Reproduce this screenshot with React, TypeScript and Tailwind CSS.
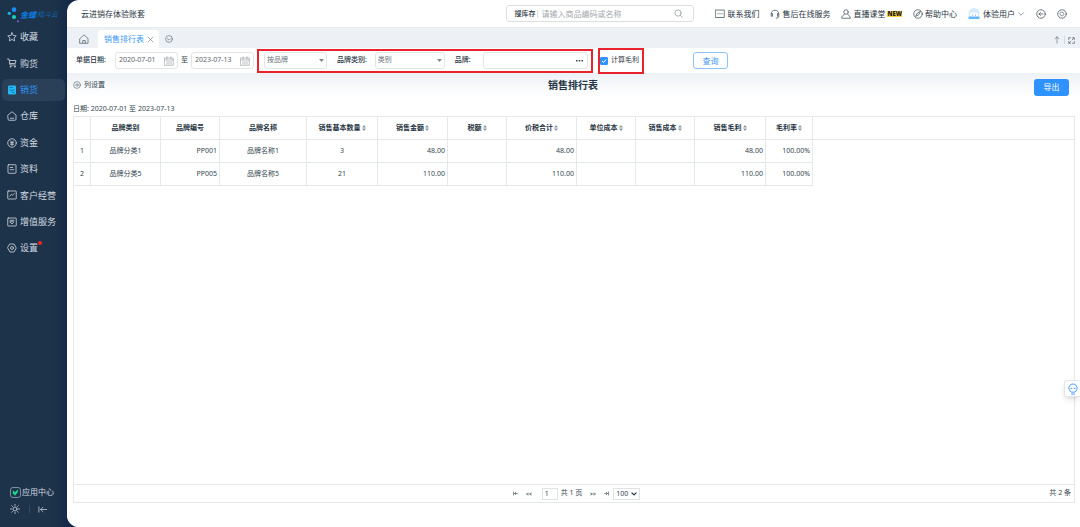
import type { ReactNode } from "react";
import clsx from "clsx";

const Icon = ({ children, className }: { children: ReactNode; className?: string }) => (
  <svg
    viewBox="0 0 20 20"
    fill="none"
    stroke="currentColor"
    strokeWidth={1.6}
    strokeLinecap="round"
    strokeLinejoin="round"
    aria-hidden="true"
    className={clsx("shrink-0", className)}
  >
    {children}
  </svg>
);

const menu: { label: string; icon: ReactNode; active?: boolean; dot?: boolean }[] = [
  { label: "收藏", icon: <path d="M10 1.500l2.600 5.400 5.900.8-4.300 4.100 1 5.900-5.200-2.800-5.200 2.800 1-5.900L1.500 7.700l5.900-.8z" /> },
  {
    label: "购货",
    icon: (
      <>
        <path d="M1 2h3l2 12h11M5 5h13l-1.500 6H6" />
        <circle cx="7" cy="17.500" r="1" />
        <circle cx="15.500" cy="17.500" r="1" />
      </>
    ),
  },
  {
    label: "销货",
    active: true,
    icon: (
      <>
        <rect x="2" y="1" width="16" height="18" rx="2" fill="#22b8f0" stroke="none" />
        <path d="M6 5h5M6 9l4 3 4-3M11 15h3" stroke="#1460a8" />
      </>
    ),
  },
  { label: "仓库", icon: <path d="M2 8l8-6.500L18 8v8.500a2 2 0 0 1-2 2H4a2 2 0 0 1-2-2zM6.500 14.500h7" /> },
  {
    label: "资金",
    icon: (
      <>
        <circle cx="10" cy="10" r="8.500" />
        <path d="M7 5.500l3 3.500 3-3.500M10 9v6M7 9.500h6M7 12.500h6" />
      </>
    ),
  },
  {
    label: "资料",
    icon: (
      <>
        <rect x="2" y="1.500" width="16" height="17" rx="1" />
        <path d="M6.500 7h5M6.500 11.500h7" />
      </>
    ),
  },
  {
    label: "客户经营",
    icon: (
      <>
        <rect x="1.500" y="2" width="17" height="16" rx="1" />
        <path d="M5.500 12l3-3 2.500 1.500L14.500 7" />
      </>
    ),
  },
  {
    label: "增值服务",
    icon: (
      <>
        <rect x="1.500" y="2" width="17" height="16" rx="1" />
        <path d="M6 6.500h8M6.500 10l3.500 4 3.500-4a2 2 0 0 0-3.500-.5A2 2 0 0 0 6.500 10z" />
      </>
    ),
  },
  {
    label: "设置",
    dot: true,
    icon: (
      <>
        <path d="M6 2h8l4.500 8L14 18H6l-4.500-8z" />
        <circle cx="10" cy="10" r="3" />
      </>
    ),
  },
];

const links: { label: string; icon: ReactNode; badge?: string }[] = [
  {
    label: "联系我们",
    icon: (
      <>
        <path d="M1.500 2h17v15h-17z" />
        <path d="M5.500 9.500h1M9.500 9.500h1M13.500 9.500h1" />
      </>
    ),
  },
  {
    label: "售后在线服务",
    icon: <path d="M2.500 10a7.500 7.500 0 0 1 15 0M2.500 10v4.500H5V10zM17.500 10v4.500H15V10zM17.500 14.500c0 2.500-2 4-5 4" />,
  },
  {
    label: "直播课堂",
    badge: "NEW",
    icon: (
      <>
        <circle cx="10" cy="6" r="4.500" />
        <path d="M6.500 10.500L1.500 16v2.500h17V16l-5-5.500" />
      </>
    ),
  },
  {
    label: "帮助中心",
    icon: (
      <>
        <circle cx="10" cy="10" r="8.500" />
        <path d="M14.500 5.500l-3 6-6 3 3-6z" />
      </>
    ),
  },
];

const columns = [
  { title: "", width: "w-[17px]", align: "text-center" },
  { title: "品牌类别", width: "w-[70px]", align: "text-center" },
  { title: "品牌编号", width: "w-[59px]", align: "text-right" },
  { title: "品牌名称", width: "w-[87px]", align: "text-center" },
  { title: "销售基本数量", width: "w-[71px]", align: "text-center", sort: true },
  { title: "销售金额", width: "w-[70px]", align: "text-right", sort: true },
  { title: "税额", width: "w-[59px]", align: "text-right", sort: true },
  { title: "价税合计", width: "w-[70px]", align: "text-right", sort: true },
  { title: "单位成本", width: "w-[59px]", align: "text-right", sort: true },
  { title: "销售成本", width: "w-[59px]", align: "text-right", sort: true },
  { title: "销售毛利", width: "w-[71px]", align: "text-right", sort: true },
  { title: "毛利率", width: "w-[47px]", align: "text-right", sort: true },
];

const rows = [
  ["1", "品牌分类1", "PP001", "品牌名称1", "3", "48.00", "", "48.00", "", "", "48.00", "100.00%"],
  ["2", "品牌分类5", "PP005", "品牌名称5", "21", "110.00", "", "110.00", "", "", "110.00", "100.00%"],
];

const Sidebar = () => (
  <aside className="flex w-[67px] shrink-0 flex-col text-[#d3dae1]">
    <div className="flex h-[26px] items-center pl-[7px] pt-1">
      <svg viewBox="0 0 36 48" className="h-4 w-3 shrink-0" aria-hidden="true">
        <circle cx="21" cy="8" r="7" fill="#1b8df5" />
        <circle cx="7" cy="19" r="5" fill="#12b9e8" />
        <circle cx="21" cy="30" r="6" fill="#16d3c0" />
        <circle cx="33" cy="43" r="3" fill="#8a5cf0" />
      </svg>
      <span className="ml-px flex items-center gap-px whitespace-nowrap text-[7px] italic text-[#1565b0]">
        <b className="text-[8px] text-[#0d7be0]">金蝶</b>
        精斗云
      </span>
    </div>
    <ul className="flex h-[233px] flex-col justify-between">
      {menu.map((item) => (
        <li key={item.label} className="px-[2px]">
          <a
            href="#"
            className={clsx(
              "flex h-[22px] items-center gap-[3px] rounded-[5px] pl-[5px] text-[9px]",
              item.active && "bg-[#2a4059] text-[#2f93f5]"
            )}
          >
            <Icon className="size-[10px]">{item.icon}</Icon>
            <span className="relative whitespace-nowrap">
              {item.label}
              {item.dot && <i className="absolute -right-1 top-0 size-1 rounded-full bg-[#f5222d]" />}
            </span>
          </a>
        </li>
      ))}
    </ul>
    <div className="mt-auto pb-3 pl-[10px]">
      <a href="#" className="flex h-[14px] items-center gap-px text-[8px]">
        <svg viewBox="0 0 20 20" className="size-[11px] shrink-0" fill="none" aria-hidden="true">
          <rect x="1" y="1" width="18" height="18" rx="4" stroke="#9aa8b5" strokeWidth="1.500" />
          <path d="M5 6l4 3 6-5-1 6-5 6-4-4z" fill="#1fd08a" />
        </svg>
        应用中心
      </a>
      <div className="mt-1 flex h-3 items-center">
        <button aria-label="主题">
          <Icon className="size-[10px]">
            <circle cx="10" cy="10" r="4" />
            <path d="M10 1v2M10 17v2M1 10h2M17 10h2M3.500 3.500l1.500 1.500M15 15l1.500 1.500M16.500 3.500L15 5M5 15l-1.500 1.500" />
          </Icon>
        </button>
        <span className="ml-[9px] mr-2 h-2 w-px bg-[#34485d]" />
        <button aria-label="收起">
          <Icon className="size-[9px]">
            <path d="M2 4v12M19 10H6M11 5l-5 5 5 5" />
          </Icon>
        </button>
      </div>
    </div>
  </aside>
);

const Header = () => (
  <header className="flex h-7 items-center border-b border-[#e6ebef] pl-[14px] pr-[13px] text-[8px] text-[#1f3442]">
    <span>云进销存体验账套</span>
    <div className="ml-auto flex h-[17px] w-[188px] items-center rounded-[3px] border border-[#dcdfe2] px-[7px]">
      <label htmlFor="stock" className="shrink-0 border-r border-[#dcdfe2] pr-[2px] text-[7px] font-medium leading-[8px]">
        搜库存
      </label>
      <input
        id="stock"
        placeholder="请输入商品编码或名称"
        className="min-w-0 flex-1 pl-[3px] outline-none placeholder:text-[#a3a8ad]"
      />
      <Icon className="mr-[3px] size-[9px] text-[#8d959c]">
        <circle cx="9" cy="9" r="7" />
        <path d="M14 14l4.500 4.500" />
      </Icon>
    </div>
    <nav className="ml-[21px] flex items-center gap-[11px]">
      {links.map((link) => (
        <a key={link.label} href="#" className="flex items-center gap-[2px] whitespace-nowrap">
          <Icon className="size-[10px] text-[#4a5a66]">{link.icon}</Icon>
          {link.label}
          {link.badge && (
            <b className="bg-[#fcd53a] text-[6px] font-black leading-[6px] text-[#1c1c1c]">{link.badge}</b>
          )}
        </a>
      ))}
      <button className="flex items-center gap-[3px] whitespace-nowrap">
        <svg viewBox="0 0 24 24" className="size-3" aria-hidden="true">
          <circle cx="12" cy="11" r="11" fill="#d5eafc" />
          <rect x="4" y="9" width="16" height="9" rx="4" fill="#fff" />
          <path d="M1 17h22v5H1z" fill="#66b7fb" />
          <circle cx="9" cy="14" r="1" fill="#3b8fe0" />
          <circle cx="15" cy="14" r="1" fill="#3b8fe0" />
        </svg>
        体验用户
        <Icon className="size-[6px]">
          <path d="M2 6l8 8 8-8" />
        </Icon>
      </button>
      <button aria-label="退出" className="ml-px text-[#4a5a66]">
        <Icon className="size-[10px]">
          <circle cx="10" cy="10" r="8.500" />
          <path d="M14 10H6M9 7l-3 3 3 3" />
        </Icon>
      </button>
      <button aria-label="设置" className="text-[#4a5a66]">
        <Icon className="size-[10px]">
          <circle cx="10" cy="10" r="8.500" />
          <path d="M8 6.500h4l2 3.500-2 3.500H8L6 10z" strokeWidth={1.2} />
        </Icon>
      </button>
    </nav>
  </header>
);

const Tabs = () => (
  <div className="flex h-5 items-end bg-[#edf1f5] pl-[11px] pr-[5px] text-[#5c6b76]">
    <button aria-label="首页" className="flex h-[18px] w-[20px] items-center pl-px">
      <Icon className="size-[10px]">
        <path d="M2 9l8-7.500L18 9v9.500H2zM7.500 18v-5h5v5" />
      </Icon>
    </button>
    <div className="flex h-[18px] items-center gap-[3px] rounded-t-[3px] bg-white pl-[6px] pr-[5px] text-[8px] text-[#3d97f7]">
      销售排行表
      <button aria-label="关闭" className="text-[#5c6b76]">
        <Icon className="size-[7px]">
          <path d="M3 3l14 14M17 3L3 17" />
        </Icon>
      </button>
    </div>
    <button aria-label="更多标签" className="flex h-[18px] items-center pl-[6px]">
      <Icon className="size-2">
        <circle cx="10" cy="10" r="8.500" />
        <path d="M6 9l4 4 4-4" />
      </Icon>
    </button>
    <div className="ml-auto flex h-4 items-center gap-[3px]">
      <button aria-label="置顶">
        <Icon className="size-2">
          <path d="M10 18V2M5 7l5-5 5 5" />
        </Icon>
      </button>
      <span className="h-2 w-px bg-[#d3dade]" />
      <button aria-label="全屏">
        <Icon className="size-[7px]">
          <path d="M2 7V2h5M13 2h5v5M18 13v5h-5M7 18H2v-5M12 8l4-4M4 16l4-4" strokeWidth={2.2} />
        </Icon>
      </button>
    </div>
  </div>
);

const DateBox = ({ label, value }: { label: string; value: string }) => (
  <div className="flex h-[17px] w-[63px] items-center rounded-[3px] border border-[#e2e5e8] pl-[3px] pr-[3px]">
    <input aria-label={label} defaultValue={value} className="min-w-0 flex-1 text-[#5b656d] outline-none" />
    <Icon className="size-[10px] text-[#8d959c]">
      <path d="M1.500 4h17v14.500h-17zM1.500 8h17M6 1.500V6M14 1.500V6M6 11v5M10 11v5M14 11v5" strokeWidth={1.2} />
    </Icon>
  </div>
);

const SelectBox = ({ id, label, value }: { id: string; label?: string; value: string }) => (
  <div className="relative flex items-center">
    <select
      id={id}
      aria-label={label}
      className={clsx(
        "h-[17px] appearance-none rounded-[3px] border border-[#e2e5e8] pl-[2px] text-[#6c757c]",
        id === "groupBy" ? "w-[63px]" : "w-[70px]"
      )}
    >
      <option>{value}</option>
    </select>
    <svg viewBox="0 0 8 5" className="pointer-events-none absolute right-[3px] h-[3px] w-[5px]" aria-hidden="true">
      <path d="M0 0h8L4 5z" fill="#7c868d" />
    </svg>
  </div>
);

const Filters = () => (
  <form className="flex h-[25px] items-center whitespace-nowrap bg-white pl-[9px] text-[7px] text-[#1f3442]">
    <span className="mr-[9px] font-medium">单据日期:</span>
    <DateBox label="开始日期" value="2020-07-01" />
    <span className="mx-[3px]">至</span>
    <DateBox label="结束日期" value="2023-07-13" />
    <div className="relative z-10 ml-[3px] flex h-6 w-[336px] items-center border-2 border-[#e8232b] pl-[5px] pr-[3px]">
      <SelectBox id="groupBy" label="汇总方式" value="按品牌" />
      <label htmlFor="category" className="ml-[10px] mr-2 font-medium">
        品牌类别:
      </label>
      <SelectBox id="category" value="类别" />
      <label htmlFor="brand" className="ml-[10px] mr-3 font-medium">
        品牌:
      </label>
      <div className="flex h-[17px] min-w-0 flex-1 items-center rounded-[3px] border border-[#e2e5e8] pr-1">
        <input id="brand" className="min-w-0 flex-1 outline-none" />
        <button type="button" aria-label="选择品牌">
          <svg viewBox="0 0 14 4" className="h-[2px] w-[7px]" aria-hidden="true">
            <path d="M0 0h3v3H0zM5.500 0h3v3h-3zM11 0h3v3h-3z" fill="#3a4a55" />
          </svg>
        </button>
      </div>
    </div>
    <label className="relative z-10 ml-[5px] flex h-[26px] w-[46px] shrink-0 items-center gap-[3px] border-2 border-[#e8232b]">
      <span className="relative flex size-2 shrink-0">
        <input type="checkbox" defaultChecked className="peer size-2 appearance-none rounded-[1px] border border-[#c5cbd0] checked:border-[#2f93ff] checked:bg-[#2f93ff]" />
        <svg viewBox="0 0 8 8" className="pointer-events-none absolute inset-0 hidden peer-checked:block" aria-hidden="true">
          <path d="M2 4l1.500 1.500L6 2.500" fill="none" stroke="#fff" />
        </svg>
      </span>
      计算毛利
    </label>
    <button type="button" className="ml-[49px] h-[17px] w-[35px] rounded-[3px] border border-[#8cc3ff] text-[8px] text-[#3d97f7]">
      查询
    </button>
  </form>
);

const SortMark = () => (
  <svg viewBox="0 0 8 12" className="ml-px inline-block h-[6px] w-1 align-middle" aria-hidden="true">
    <path d="M0 5l4-5 4 5zM0 7h8l-4 5z" fill="#8a959d" />
  </svg>
);

const Report = () => (
  <section className="flex flex-1 flex-col bg-linear-to-b from-[#edf1f5] to-white to-[24px] pb-6 pl-[6px] pr-[5px] text-[7px] text-[#33464f]">
    <div className="grid h-7 grid-cols-[1fr_auto_1fr] items-center pr-[6px]">
      <button className="flex items-center gap-[3px] justify-self-start pb-1">
        <Icon className="size-2 text-[#5c6b76]">
          <circle cx="10" cy="10" r="8.500" />
          <circle cx="10" cy="10" r="3" />
        </Icon>
        列设置
      </button>
      <h1 className="pb-1 pl-1 text-[10px] font-bold text-[#1f3442]">销售排行表</h1>
      <button className="h-[17px] w-[35px] justify-self-end rounded-[3px] bg-[#2f93ff] text-[8px] text-white">导出</button>
    </div>
    <p className="flex h-[15px] items-end leading-[14px]">日期: 2020-07-01 至 2023-07-13</p>

    <div className="flex flex-1 flex-col border border-[#e5e8ea] bg-white">
      <div className="flex-1 border-b border-[#e5e8ea]">
        <div className="bg-[linear-gradient(#e5e8ea,#e5e8ea)] bg-[length:100%_1px] bg-[position:0_22px] bg-no-repeat">
          <table className="w-[739px] table-fixed border-separate border-spacing-0">
            <thead>
              <tr className="h-[23px] text-[#1f3442]">
                {columns.map((col, i) => (
                  <th key={i} className={clsx("whitespace-nowrap border-b border-r border-[#e5e8ea] p-0 font-bold", col.width)}>
                    {col.title}
                    {col.sort && <SortMark />}
                  </th>
                ))}
              </tr>
            </thead>
            <tbody>
              {rows.map((row) => (
                <tr key={row[0]} className="h-[23px]">
                  {row.map((cell, i) => (
                    <td key={i} className={clsx("border-b border-r border-[#e5e8ea] p-0", columns[i].align, columns[i].align === "text-right" && "pr-[2px]")}>
                      {cell}
                    </td>
                  ))}
                </tr>
              ))}
            </tbody>
          </table>
        </div>
      </div>

      <footer className="grid h-[17px] grid-cols-[1fr_auto_1fr] items-center pl-2 pr-[3px]">
        <div className="col-start-2 flex items-center text-[#5c6b76]">
          <button aria-label="第一页" className="mr-2">
            <Icon className="size-[5px]">
              <path d="M2 4v12M18 10H6M11 5l-5 5 5 5" strokeWidth={3} />
            </Icon>
          </button>
          <button aria-label="上一页" className="mr-[10px]">
            <Icon className="size-[6px]">
              <path d="M6 6l-4 4 4 4M17 6l-4 4 4 4M3 10h15" strokeWidth={2.500} />
            </Icon>
          </button>
          <label className="flex items-center gap-[3px] text-[#33464f]">
            <input aria-label="页码" defaultValue="1" className="h-3 w-4 border border-[#dfe3e6] pl-[2px] outline-none" />
            共 1 页
          </label>
          <button aria-label="下一页" className="ml-2 mr-2">
            <Icon className="size-[6px]">
              <path d="M14 6l4 4-4 4M3 6l4 4-4 4M17 10H2" strokeWidth={2.500} />
            </Icon>
          </button>
          <button aria-label="最后一页" className="mr-1">
            <Icon className="size-[5px]">
              <path d="M18 4v12M2 10h12M9 5l5 5-5 5" strokeWidth={3} />
            </Icon>
          </button>
          <div className="relative flex items-center">
            <select aria-label="每页条数" className="h-3 w-[27px] appearance-none border border-[#dfe3e6] pl-[2px] text-[#33464f]">
              <option>100</option>
            </select>
            <Icon className="pointer-events-none absolute right-[3px] size-[6px] text-[#1f3442]">
              <path d="M3 6l7 7 7-7" strokeWidth={4} />
            </Icon>
          </div>
        </div>
        <span className="justify-self-end">共 2 条</span>
      </footer>
    </div>
  </section>
);

export default function App() {
  return (
    <div className="relative flex min-h-screen bg-[linear-gradient(90deg,#1d3349_0,#1d3349_54px,#14294a_68px)] font-['Noto_Sans','Noto_Sans_CJK_SC',sans-serif]">
      <Sidebar />
      <main className="flex min-w-0 flex-1 flex-col overflow-hidden rounded-l-[12px] bg-white">
        <Header />
        <Tabs />
        <Filters />
        <Report />
      </main>
      <button
        aria-label="智能助手"
        className="absolute right-0 top-[380px] flex h-[17px] w-4 items-center justify-center rounded-l-[3px] border border-r-0 border-[#e2e6ea] bg-white text-[#3d97f7] shadow-md"
      >
        <Icon className="size-3">
          <path d="M7 15a7 7 0 1 1 6 0zM7.500 18.500h5M6.500 9h1.500M12 9h1.500" />
        </Icon>
      </button>
    </div>
  );
}
